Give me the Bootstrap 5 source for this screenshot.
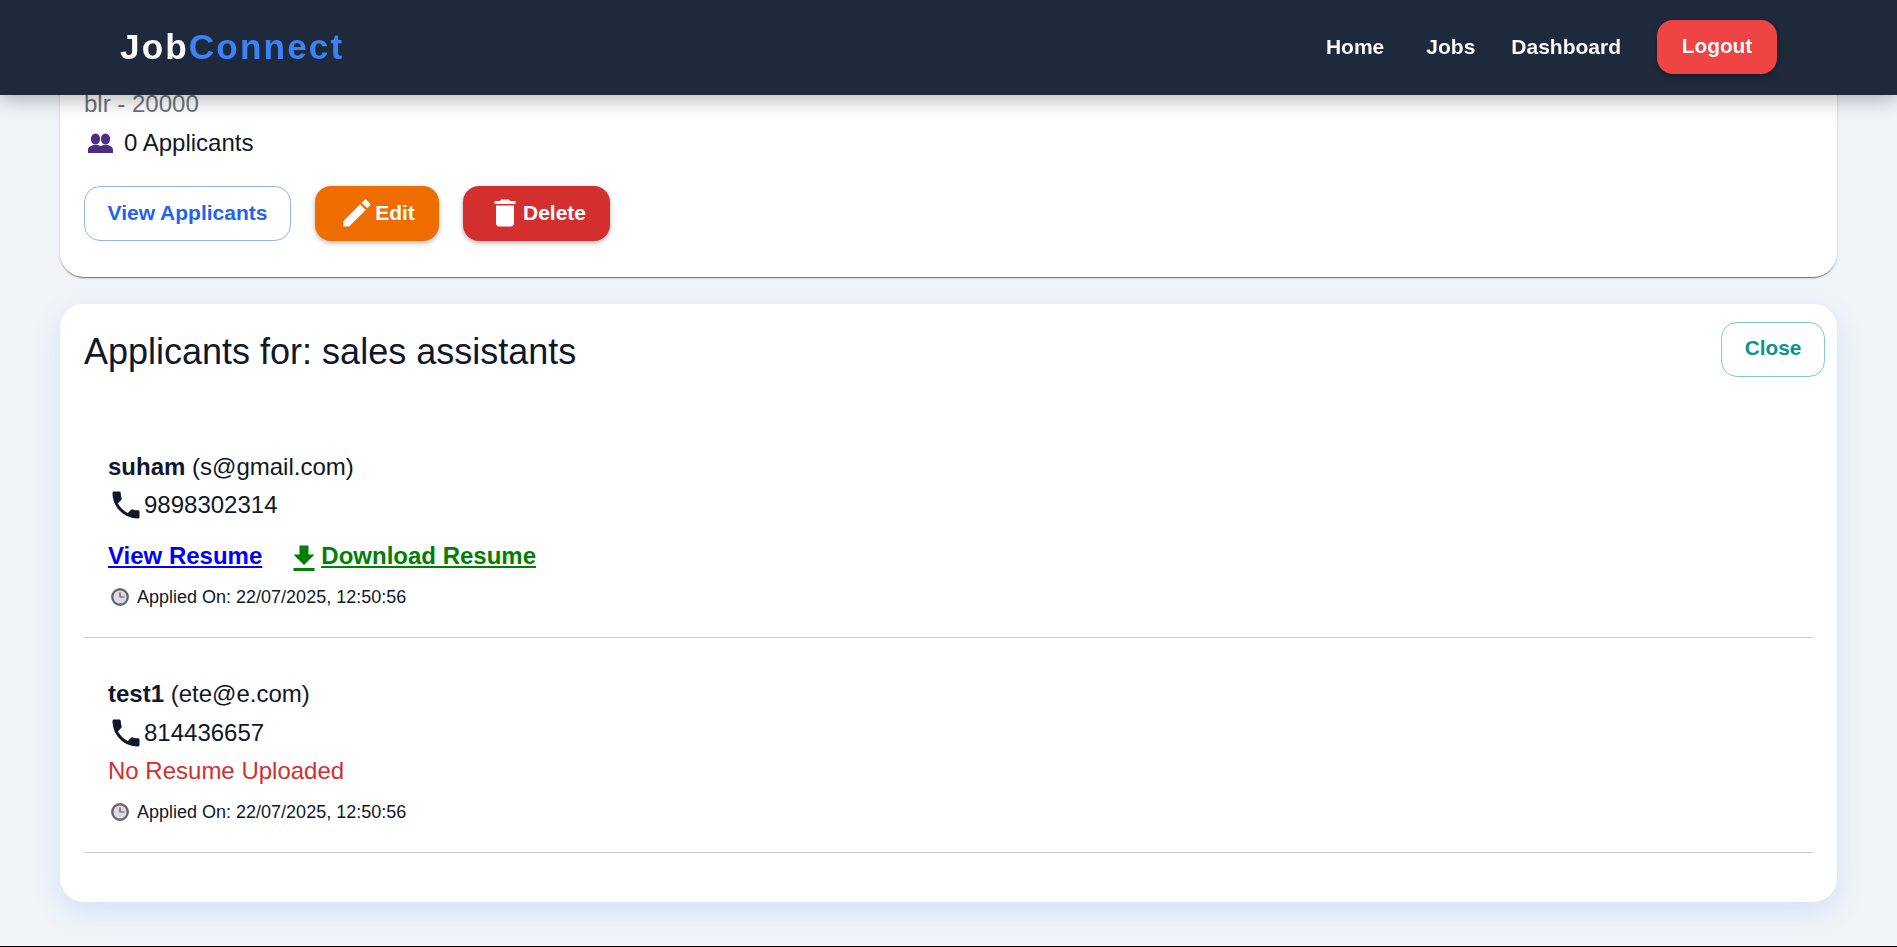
<!DOCTYPE html>
<html lang="en">
<head>
  <meta charset="UTF-8">
  <meta name="viewport" content="width=device-width, initial-scale=1.0">
  <title>JobConnect</title>
  <link href="https://cdn.jsdelivr.net/npm/bootstrap@5.3.3/dist/css/bootstrap.min.css" rel="stylesheet">
  <style>
    html, body { height: 100%; overflow: hidden; }
    body { background: #f1f5f9; color: #0f172a; font-family: "Liberation Sans", Arial, sans-serif; }
    .top-bar { height: 95px; background: #1e293b; padding: 0 120px 2px; box-shadow: 0 4px 20px rgba(0,0,0,.3); }
    .brand-logo { font-size: 35.2px; font-weight: 700; letter-spacing: 2.1px; color: #f8fafc; line-height: 1; }
    .brand-logo span { color: #3b82f6; }
    .top-link { font-size: 21px; font-weight: 700; color: #f8fafc; text-decoration: none; }
    .link-home { margin-right: 42px; }
    .link-jobs, .link-dash { margin-right: 36px; }
    .logout-btn { background: #ef4444; color: #fff; font-size: 20.8px; font-weight: 700; width: 120px; height: 54px; border-radius: 16px; border: 0; padding: 0 0 2px; box-shadow: 0 2px 6px rgba(0,0,0,.3); }
    .page-wrap { height: 947px; border-bottom: 1px solid #000; padding: 0 60px; }
    .job-panel { background: #fff; height: 277px; padding: 88px 24px 0; border-radius: 0 0 24px 24px; box-shadow: 0 2px 1px -1px rgba(0,0,0,.45), 0 1px 3px rgba(0,0,0,.2); }
    .job-meta { font-size: 24px; line-height: 32px; color: #6b7280; }
    .job-count { font-size: 24px; line-height: 32px; margin-top: 7px; margin-bottom: 27px; color: #0f172a; }
    .job-count svg { margin-left: 4px; margin-right: 11px; }
    .act-btn { height: 55px; border-radius: 16px; font-size: 21px; font-weight: 700; display: inline-flex; align-items: center; justify-content: center; padding: 0 0 2px; }
    .act-outline { width: 207px; background: #fff; color: #2563eb; border: 1px solid #93b4f5; }
    .act-edit { width: 124px; background: #ef6c00; color: #fff; border: 0; box-shadow: 0 2px 5px rgba(0,0,0,.3); }
    .act-del { width: 147px; background: #d32f2f; color: #fff; border: 0; box-shadow: 0 2px 5px rgba(0,0,0,.3); }
    .app-panel { background: #fff; height: 598px; margin-top: 27px; padding: 18px 12px 0 24px; border-radius: 24px; box-shadow: 0 10px 30px rgba(37,99,235,.14); }
    .app-title { font-size: 36px; font-weight: 400; line-height: 1; margin: 0; padding-top: 12px; }
    .close-btn { width: 104px; height: 55px; background: #fff; color: #0d9488; border: 1px solid #7fcdc5; border-radius: 16px; font-size: 20.8px; font-weight: 700; padding: 0 0 3px; }
    .app-row { padding: 0 24px; border-bottom: 1px solid #ccc; margin-right: 12px; }
    .row-one { margin-top: 75px; height: 186px; }
    .row-two { margin-top: 41px; height: 174px; }
    .app-name { font-size: 24px; line-height: 30px; }
    .app-phone { font-size: 24px; line-height: 36px; margin-top: 5px; }
    .row-two .app-phone { margin-top: 6px; }
    .res-links { margin-top: 15px; gap: 24px; }
    .res-link { font-size: 24px; font-weight: 700; }
    .res-view { color: #00f; }
    .res-dl { color: green; }
    .res-dl svg { margin: 3px -1px -3px 0; }
    .no-res { font-size: 24px; color: #d32f2f; line-height: 30px; margin-top: 5px; }
    .app-when { font-size: 18px; line-height: 24px; margin-top: 11px; }
    .row-two .app-when { margin-top: 14px; }
    .app-when svg { margin-left: 3px; margin-right: 8px; }
  </style>
</head>
<body>
  <nav class="navbar fixed-top top-bar d-flex justify-content-between align-items-center">
    <div class="brand-logo">Job<span>Connect</span></div>
    <div class="d-flex align-items-center">
      <a class="top-link link-home" href="#">Home</a>
      <a class="top-link link-jobs" href="#">Jobs</a>
      <a class="top-link link-dash" href="#">Dashboard</a>
      <button class="logout-btn">Logout</button>
    </div>
  </nav>

  <main class="page-wrap">
    <section class="job-panel">
      <div class="job-meta">blr - 20000</div>
      <div class="job-count d-flex align-items-center">
        <svg width="25" height="20" viewBox="0 0 25 20"><g fill="#4f2d87"><ellipse cx="7.5" cy="6" rx="4.6" ry="5.6"/><path d="M0 20v-3.5c0-2.5 3-3.5 5-4.5h5c2 1 5 2 5 4.5V20z"/><ellipse cx="17.5" cy="6" rx="4.6" ry="5.6"/><path d="M10 20v-3.5c0-2.5 3-3.5 5-4.5h5c2 1 5 2 5 4.5V20z"/></g></svg>
        0 Applicants
      </div>
      <div class="d-flex" style="gap:24px">
        <button class="act-btn act-outline">View Applicants</button>
        <button class="act-btn act-edit"><svg width="36" height="36" viewBox="0 0 24 24" fill="#fff"><path d="M3 17.25V21h3.75L17.81 9.94l-3.75-3.75L3 17.25zM20.71 7.04c.39-.39.39-1.02 0-1.41l-2.34-2.34c-.39-.39-1.02-.39-1.41 0l-1.83 1.83 3.75 3.75 1.83-1.83z"/></svg>Edit</button>
        <button class="act-btn act-del"><svg width="36" height="36" viewBox="0 0 24 24" fill="#fff"><path d="M6 19c0 1.1.9 2 2 2h8c1.1 0 2-.9 2-2V7H6v12zM19 4h-3.5l-1-1h-5l-1 1H5v2h14V4z"/></svg>Delete</button>
      </div>
    </section>

    <section class="app-panel">
      <div class="d-flex justify-content-between align-items-start">
        <h2 class="app-title">Applicants for: sales assistants</h2>
        <button class="close-btn">Close</button>
      </div>

      <div class="app-row row-one">
        <div class="app-name"><strong>suham</strong> (s@gmail.com)</div>
        <div class="app-phone d-flex align-items-center">
          <svg width="36" height="36" viewBox="0 0 24 24" fill="#0f172a"><path d="M6.62 10.79c1.44 2.83 3.76 5.14 6.59 6.59l2.2-2.2c.27-.27.67-.36 1.02-.24 1.12.37 2.33.57 3.57.57.55 0 1 .45 1 1V20c0 .55-.45 1-1 1-9.39 0-17-7.61-17-17 0-.55.45-1 1-1h3.5c.55 0 1 .45 1 1 0 1.25.2 2.45.57 3.57.11.35.03.74-.25 1.02l-2.2 2.2z"/></svg>9898302314
        </div>
        <div class="res-links d-flex align-items-center">
          <a class="res-link res-view" href="#">View Resume</a>
          <a class="res-link res-dl d-inline-flex align-items-center" href="#"><svg width="36" height="36" viewBox="0 0 24 24" fill="green"><path d="M19 9h-4V3H9v6H5l7 7 7-7zM5 18v2h14v-2H5z"/></svg><u>Download Resume</u></a>
        </div>
        <div class="app-when d-flex align-items-center">
          <svg width="18" height="18" viewBox="0 0 20 20"><circle cx="10" cy="10" r="8.6" fill="#dcdce6" stroke="#66666f" stroke-width="2.6"/><path d="M10 5v5h5" fill="none" stroke="#55555f" stroke-width="1.2"/><path d="M10 5v4" stroke="#d9476b" stroke-width="1.2"/></svg>Applied On: 22/07/2025, 12:50:56
        </div>
      </div>

      <div class="app-row row-two">
        <div class="app-name"><strong>test1</strong> (ete@e.com)</div>
        <div class="app-phone d-flex align-items-center">
          <svg width="36" height="36" viewBox="0 0 24 24" fill="#0f172a"><path d="M6.62 10.79c1.44 2.83 3.76 5.14 6.59 6.59l2.2-2.2c.27-.27.67-.36 1.02-.24 1.12.37 2.33.57 3.57.57.55 0 1 .45 1 1V20c0 .55-.45 1-1 1-9.39 0-17-7.61-17-17 0-.55.45-1 1-1h3.5c.55 0 1 .45 1 1 0 1.25.2 2.45.57 3.57.11.35.03.74-.25 1.02l-2.2 2.2z"/></svg>814436657
        </div>
        <div class="no-res">No Resume Uploaded</div>
        <div class="app-when d-flex align-items-center">
          <svg width="18" height="18" viewBox="0 0 20 20"><circle cx="10" cy="10" r="8.6" fill="#dcdce6" stroke="#66666f" stroke-width="2.6"/><path d="M10 5v5h5" fill="none" stroke="#55555f" stroke-width="1.2"/><path d="M10 5v4" stroke="#d9476b" stroke-width="1.2"/></svg>Applied On: 22/07/2025, 12:50:56
        </div>
      </div>
    </section>
  </main>
  <script src="https://cdn.jsdelivr.net/npm/bootstrap@5.3.3/dist/js/bootstrap.bundle.min.js"></script>
</body>
</html>
